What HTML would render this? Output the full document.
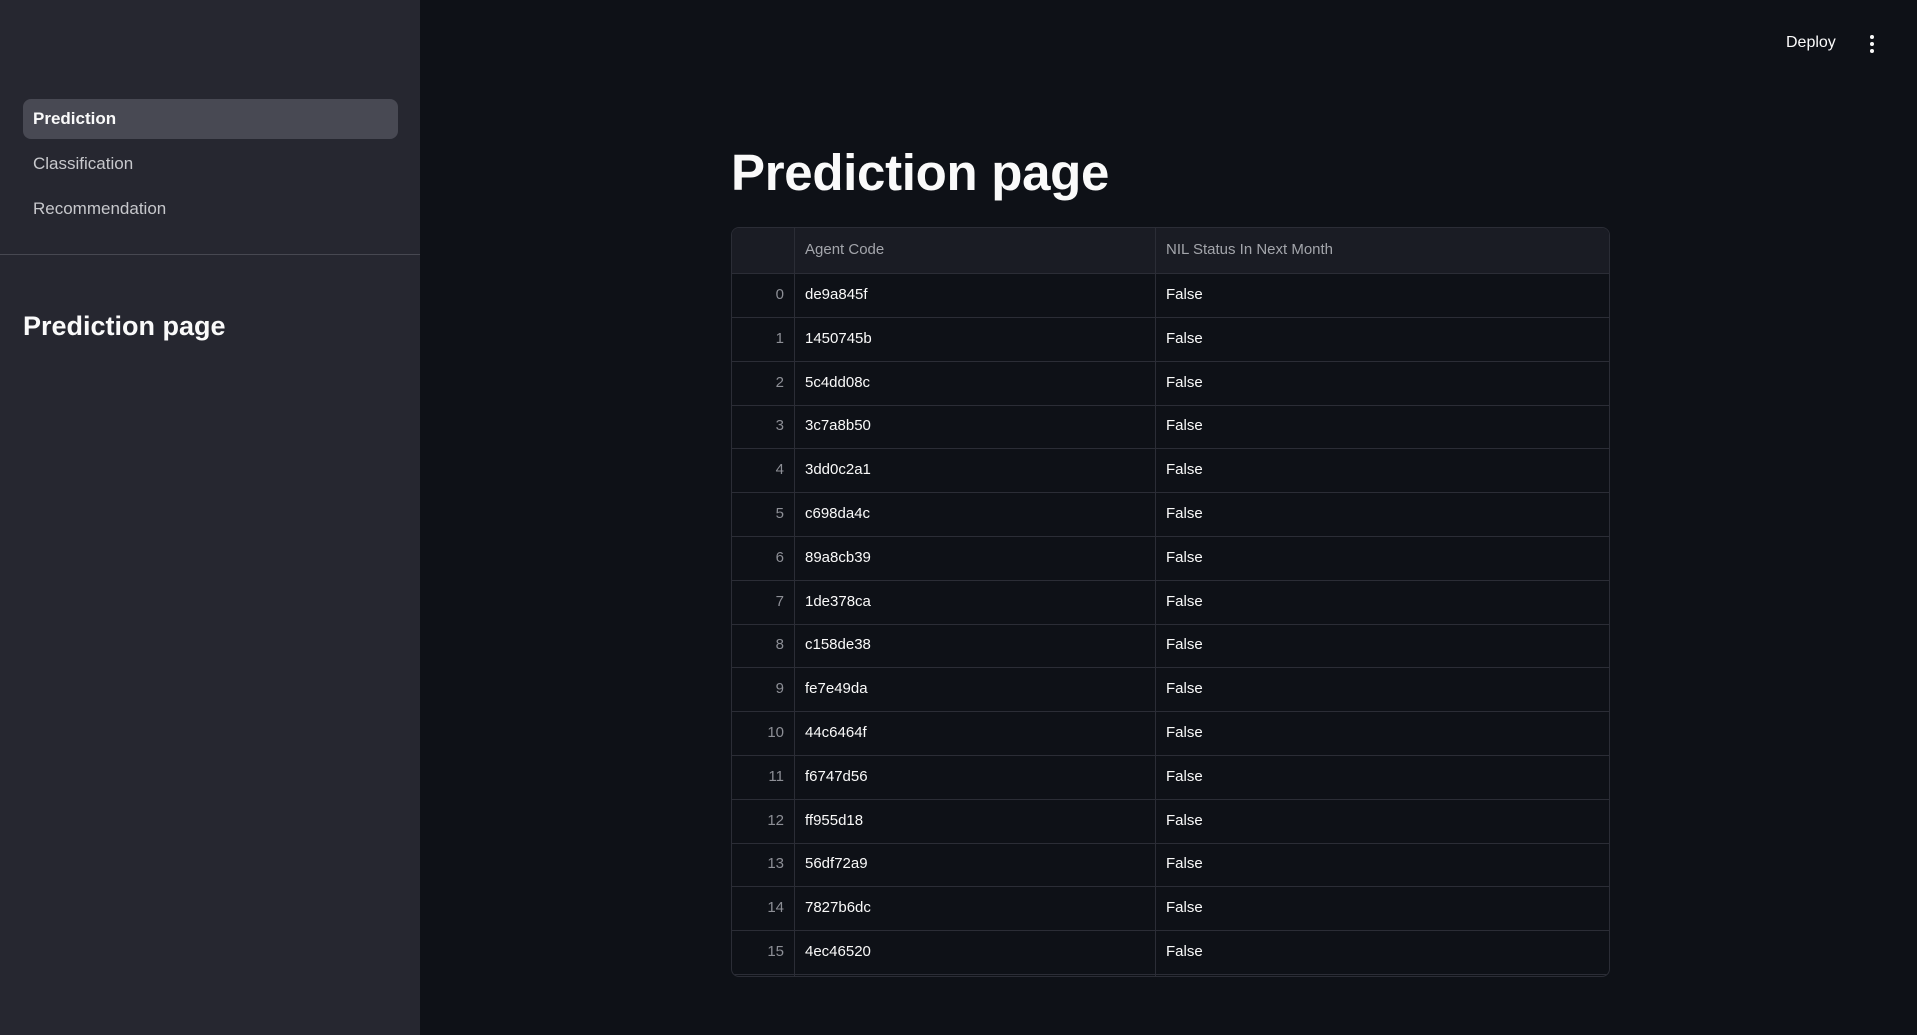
<!DOCTYPE html>
<html><head><meta charset="utf-8"><style>
*{margin:0;padding:0;box-sizing:border-box}
body{width:1917px;height:1035px;background:#0e1117;font-family:"Liberation Sans",sans-serif;color:#fafafa;position:relative;overflow:hidden}
.sb{position:absolute;left:0;top:0;width:420px;height:1035px;background:#262730}
.nav{position:absolute;left:23px;width:375px;height:40px;border-radius:8px;font-size:17px;line-height:40px;padding-left:10px;color:#c7c8cc}
.nav.a{background:#484953;color:#fafafa;font-weight:bold}
.hr{position:absolute;left:0;top:254px;width:420px;height:1px;background:#474851}
.sh{position:absolute;left:23px;top:311px;font-size:27px;font-weight:bold}
.title{position:absolute;left:731px;top:143px;font-size:51px;font-weight:bold;letter-spacing:-0.3px}
.tbl{position:absolute;left:731px;top:227px;width:879px;height:750px;border:1px solid #2b2d36;border-radius:8px;overflow:hidden}
.row{position:absolute;left:0;width:879px;height:44px;border-bottom:1px solid #2b2d36;font-size:15px;line-height:42px}
.hd{background:#1a1c24;color:#a3a5ab;height:46px;line-height:44px}
.c{position:absolute;top:0;height:100%}
.i{left:0;width:63px;text-align:right;padding-right:10px;color:#8d8f96;border-right:1px solid #2b2d36}
.a2{left:63px;width:361px;padding-left:10px;border-right:1px solid #2b2d36}
.b{left:424px;padding-left:10px}
.dep{position:absolute;left:1786px;top:34px;font-size:16px}
.dots{position:absolute;left:1870px;top:35px;width:4px}
.dots i{display:block;width:4px;height:4px;border-radius:2px;background:#fafafa;margin-bottom:3px}
</style></head><body>
<div class="sb">
<div class="nav a" style="top:99px">Prediction</div>
<div class="nav" style="top:144px">Classification</div>
<div class="nav" style="top:189px">Recommendation</div>
<div class="hr"></div>
<div class="sh">Prediction page</div>
</div>
<div class="dep">Deploy</div>
<div class="dots"><i></i><i></i><i></i></div>
<div class="title">Prediction page</div>
<div class="tbl">
<div class="row hd" style="top:0"><div class="c i"></div><div class="c a2">Agent Code</div><div class="c b">NIL Status In Next Month</div></div>
<div class="row" style="top:46px"><div class="c i">0</div><div class="c a2">de9a845f</div><div class="c b">False</div></div>
<div class="row" style="top:89.8px"><div class="c i">1</div><div class="c a2">1450745b</div><div class="c b">False</div></div>
<div class="row" style="top:133.6px"><div class="c i">2</div><div class="c a2">5c4dd08c</div><div class="c b">False</div></div>
<div class="row" style="top:177.4px"><div class="c i">3</div><div class="c a2">3c7a8b50</div><div class="c b">False</div></div>
<div class="row" style="top:221.2px"><div class="c i">4</div><div class="c a2">3dd0c2a1</div><div class="c b">False</div></div>
<div class="row" style="top:265px"><div class="c i">5</div><div class="c a2">c698da4c</div><div class="c b">False</div></div>
<div class="row" style="top:308.8px"><div class="c i">6</div><div class="c a2">89a8cb39</div><div class="c b">False</div></div>
<div class="row" style="top:352.6px"><div class="c i">7</div><div class="c a2">1de378ca</div><div class="c b">False</div></div>
<div class="row" style="top:396.4px"><div class="c i">8</div><div class="c a2">c158de38</div><div class="c b">False</div></div>
<div class="row" style="top:440.2px"><div class="c i">9</div><div class="c a2">fe7e49da</div><div class="c b">False</div></div>
<div class="row" style="top:484px"><div class="c i">10</div><div class="c a2">44c6464f</div><div class="c b">False</div></div>
<div class="row" style="top:527.8px"><div class="c i">11</div><div class="c a2">f6747d56</div><div class="c b">False</div></div>
<div class="row" style="top:571.6px"><div class="c i">12</div><div class="c a2">ff955d18</div><div class="c b">False</div></div>
<div class="row" style="top:615.4px"><div class="c i">13</div><div class="c a2">56df72a9</div><div class="c b">False</div></div>
<div class="row" style="top:659.2px"><div class="c i">14</div><div class="c a2">7827b6dc</div><div class="c b">False</div></div>
<div class="row" style="top:703px"><div class="c i">15</div><div class="c a2">4ec46520</div><div class="c b">False</div></div>
<div class="row" style="top:746.8px"><div class="c i"></div><div class="c a2"></div><div class="c b"></div></div>
</div>
</body></html>
